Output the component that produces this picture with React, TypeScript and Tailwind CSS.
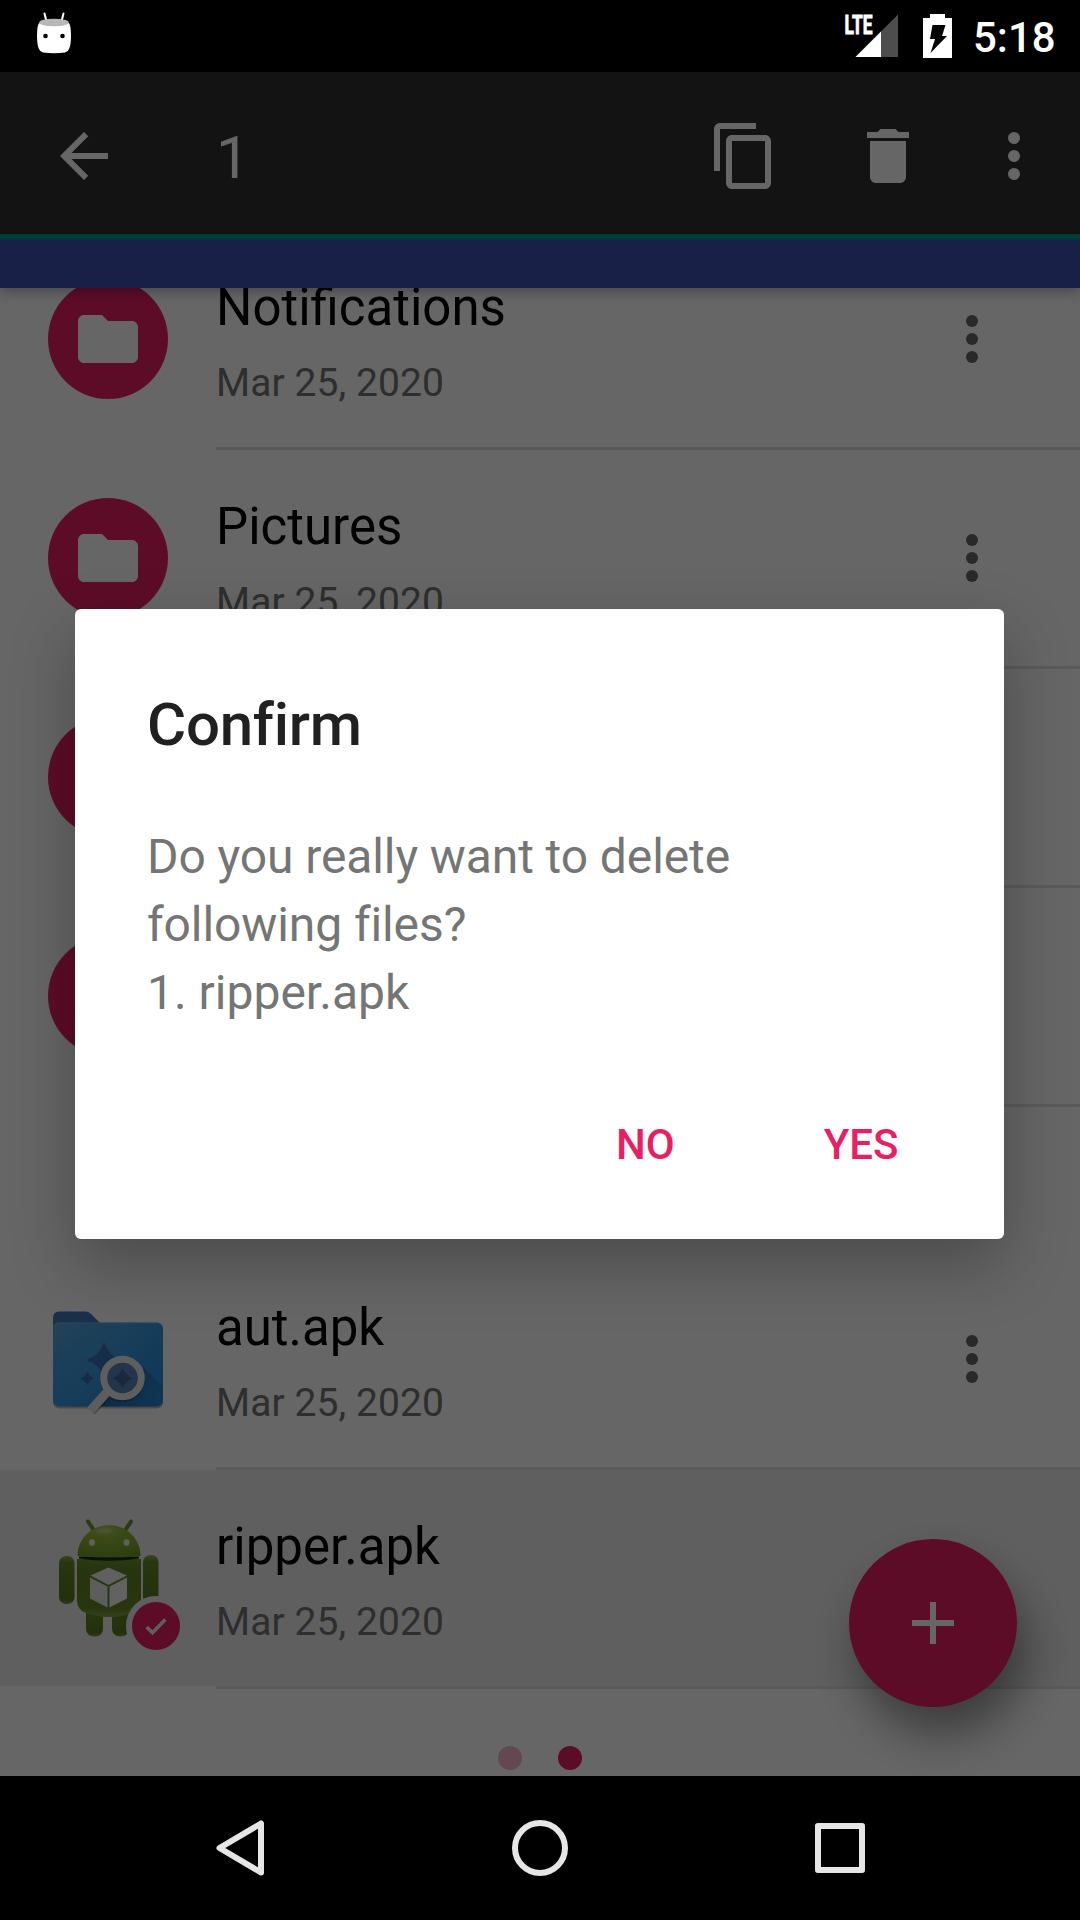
import React from "react";

function MoreIcon({ className }: { className: string }) {
  return (
    <svg viewBox="0 0 24 24" className={`h-[72px] w-[72px] shrink-0 ${className}`} fill="currentColor">
      <circle cx="12" cy="6" r="2" />
      <circle cx="12" cy="12" r="2" />
      <circle cx="12" cy="18" r="2" />
    </svg>
  );
}

function FolderBadge() {
  return (
    <div className="flex h-[120px] w-[120px] items-center justify-center rounded-full bg-[#e91e63]">
      <svg viewBox="0 0 24 24" className="h-[72px] w-[72px]" fill="#fff">
        <path d="M10 4H4c-1.1 0-1.99.9-1.99 2L2 18c0 1.1.9 2 2 2h16c1.1 0 2-.9 2-2V8c0-1.1-.9-2-2-2h-8l-2-2z" />
      </svg>
    </div>
  );
}

/* Blue folder with a magnifier over three sparkles */
function ExplorerIcon() {
  return (
    <svg viewBox="48 1299 120 120" className="h-[120px] w-[120px]">
      <defs>
        <linearGradient id="folder" x1="0" y1="0" x2="1" y2="0.6">
          <stop offset="0" stopColor="#5aa5d8" />
          <stop offset="0.5" stopColor="#429fe0" />
          <stop offset="1" stopColor="#2a90dc" />
        </linearGradient>
        <linearGradient id="folder2" x1="0" y1="0" x2="0" y2="1">
          <stop offset="0" stopColor="#2a90e0" stopOpacity="0" />
          <stop offset="1" stopColor="#2a90e0" stopOpacity="0.5" />
        </linearGradient>
        <linearGradient id="cast" gradientUnits="userSpaceOnUse" x1="125" y1="1375" x2="165" y2="1400">
          <stop offset="0" stopColor="#1c4f8c" stopOpacity="0.55" />
          <stop offset="1" stopColor="#1c4f8c" stopOpacity="0.1" />
        </linearGradient>
      </defs>
      <path d="M53 1400h110v2.500a6 6 0 0 1-6 6H59a6 6 0 0 1-6-6z" fill="#000" opacity=".25" />
      <path d="M53 1350v-32q0-6.500 6.500-6.500h26q3 0 5 2l15 15v20z" fill="#4378c0" />
      <rect x="53" y="1322.500" width="110" height="84" rx="6" fill="url(#folder)" />
      <rect x="53" y="1322.500" width="110" height="84" rx="6" fill="url(#folder2)" />
      <path d="M54 1326q1-3 5-3h98q4 0 5 3" fill="none" stroke="#8abce2" strokeWidth="1" opacity=".6" />
      <path d="M138 1362l25 25v13.500q0 6-6 6H100z" fill="url(#cast)" />
      <path d="M104 1342q4 14 18 18-14 4-18 18-4-14-18-18 14-4 18-18z" fill="#3570b4" />
      <path d="M87.500 1371q2 5.500 7 7.300-5 1.800-7 7.200-2-5.400-7-7.200 5-1.800 7-7.300z" fill="#3570b4" />
      <path d="M106 1395l-15 16" stroke="#000" strokeOpacity=".3" strokeWidth="10" />
      <circle cx="122.500" cy="1379.500" r="19" fill="none" stroke="#000" strokeOpacity=".25" strokeWidth="7" />
      <circle cx="122.500" cy="1378" r="16" fill="#5585b8" />
      <path d="M122.500 1368q3 7.500 10 10.300-7 2.800-10 10.200-3-7.400-10-10.200 7-2.800 10-10.300z" fill="#41659c" />
      <path d="M108 1391l-17.500 19.500" stroke="#e8e8e8" strokeWidth="9" />
      <circle cx="122.500" cy="1378" r="18.800" fill="none" stroke="#ececec" strokeWidth="7" />
    </svg>
  );
}

/* Green robot carrying a package cube */
function RobotIcon() {
  return (
    <svg viewBox="48 1518 120 120" className="h-[120px] w-[120px]">
      <defs>
        <radialGradient id="head" cx="0.45" cy="0.15" r="0.9">
          <stop offset="0" stopColor="#b0c766" />
          <stop offset="0.3" stopColor="#91ba3a" />
          <stop offset="1" stopColor="#729a28" />
        </radialGradient>
        <linearGradient id="body" x1="0" y1="0" x2="0" y2="1">
          <stop offset="0" stopColor="#6c932a" />
          <stop offset="0.2" stopColor="#608424" />
          <stop offset="0.85" stopColor="#638826" />
          <stop offset="1" stopColor="#84a44e" />
        </linearGradient>
        <linearGradient id="limb" x1="0" y1="0" x2="0" y2="1">
          <stop offset="0" stopColor="#8cb04a" />
          <stop offset="0.13" stopColor="#668b26" />
          <stop offset="0.9" stopColor="#577820" />
          <stop offset="1" stopColor="#799356" />
        </linearGradient>
      </defs>
      <path d="M88 1521.500l6 9M131 1521.500l-6 9" stroke="#6d912c" strokeWidth="4" strokeLinecap="round" />
      <rect x="86" y="1600" width="17" height="36.500" rx="7.500" fill="url(#limb)" />
      <rect x="112" y="1600" width="17" height="36.500" rx="7.500" fill="url(#limb)" />
      <rect x="59" y="1556" width="15.500" height="48" rx="7" fill="url(#limb)" />
      <rect x="143" y="1555" width="15.500" height="49" rx="7" fill="url(#limb)" />
      <path d="M77 1559h64v41q0 10-9 13-23 8-46 0-9-3-9-13z" fill="url(#body)" />
      <path d="M79 1556.500h60v2q-30 4.500-60 0z" fill="#1c280c" />
      <path d="M77.500 1556c0-17 14-31 31.500-31s31.500 14 31.500 31q-31.500 3-63 0z" fill="url(#head)" />
      <ellipse cx="104" cy="1531" rx="8" ry="2.500" fill="#d5d9b5" opacity=".4" />
      <ellipse cx="92" cy="1542.500" rx="2.900" ry="3.300" fill="#eee" />
      <ellipse cx="126.500" cy="1542.500" rx="2.900" ry="3.300" fill="#eee" />
      <path d="M108.500 1567.500l18.500 8-18.500 9.500-18-9.500z" fill="#efefef" />
      <path d="M90 1577.500l17.500 9v21l-17.500-9z" fill="#e9e9e9" />
      <path d="M127 1577.500l-17.500 9v21l17.500-9z" fill="#f5f5f5" />
    </svg>
  );
}

function FileRow({ icon, name, selected, menu }: { icon: React.ReactNode; name?: string; selected?: boolean; menu?: boolean }) {
  return (
    <div className="shrink-0">
      <div className={`flex h-[216px] items-start pl-12 ${selected ? "bg-[#eeeeee]" : ""}`}>
        <div className="relative mt-12 h-[120px] w-[120px] shrink-0">
          {icon}
          {selected && (
            <div className="absolute top-[78px] left-[78px] flex h-[60px] w-[60px] items-center justify-center rounded-full border-[6px] border-[#eeeeee] bg-[#e91e63]">
              <svg viewBox="0 0 48 48" className="h-12 w-12 shrink-0">
                <path d="M14.700 25l5.800 5.800 12.800-13.300" fill="none" stroke="#eee" strokeWidth="3.400" />
              </svg>
            </div>
          )}
        </div>
        <div className="mt-[47px] ml-12 flex-1">
          {name && (
            <>
              <div className="text-[51px] leading-[60px] text-black">{name}</div>
              <div className="mt-[21px] text-[39px] leading-[48px] tracking-[0.08px] text-[#737373]">Mar 25, 2020</div>
            </>
          )}
        </div>
        {menu && <MoreIcon className="mt-[72px] mr-[72px] text-[#666]" />}
      </div>
      <div className="ml-[216px] h-[3px] bg-[#e2e2e2]" />
    </div>
  );
}

function StatusBar() {
  return (
    <div className="flex h-[72px] items-start justify-between bg-black">
      <svg viewBox="0 0 100 72" className="h-[72px] w-[100px]">
        <path d="M44.500 13.500l2 8M63.500 13.500l-2 8" stroke="#fff" strokeWidth="2" strokeLinecap="round" />
        <path d="M39 23q15 6 30 0 2 3 2 13 0 9-2 13-1 3-4 3.500-11 1.500-22 0-3-.5-4-3.500-2-4-2-13 0-10 2-13z" fill="#fff" />
        <ellipse cx="54" cy="22.500" rx="14.800" ry="3.800" fill="#b8b8b8" />
        <circle cx="45.500" cy="36" r="2.300" />
        <circle cx="62.500" cy="36" r="2.300" />
      </svg>
      <div className="flex">
        <svg viewBox="840 0 130 72" className="h-[72px] w-[130px]">
          <text
            x="844.500"
            y="33.500"
            fontFamily="Roboto"
            fontWeight="700"
            fontSize="26"
            textLength="28"
            lengthAdjust="spacingAndGlyphs"
            fill="#fff"
            stroke="#fff"
            strokeWidth="0.900"
          >
            LTE
          </text>
          <path d="M898 14.500V57h-42.500z" fill="#4d4d4d" />
          <path d="M881 31.500V57h-25.500z" fill="#fff" />
          <path d="M930 14h15v4h7v40h-29V18h7z" fill="#fff" />
          <path d="M932.500 25h13l-3.500 11h5L930.500 53l4.500-14h-5z" fill="#000" />
        </svg>
        <div className="mt-[14px] w-[110px] pl-[3px] text-[42px] leading-[48px] font-medium text-white">5:18</div>
      </div>
    </div>
  );
}

function ActionBar() {
  return (
    <div className="relative z-10 shrink-0 shadow-[0_4px_12px_rgba(0,0,0,0.3)]">
      <div className="flex h-[162px] items-center bg-[#303030] text-white">
        <svg viewBox="0 0 24 24" className="mt-[6px] ml-12 h-[72px] w-[72px]" fill="currentColor">
          <path d="M20 11H7.830l5.590-5.590L12 4l-8 8 8 8 1.410-1.410L7.830 13H20v-2z" />
        </svg>
        <div className="mt-[10px] ml-24 flex-1 text-[60px] leading-[72px]">1</div>
        <svg viewBox="0 0 24 24" className="mt-[6px] mr-[72px] h-[72px] w-[72px]" fill="currentColor">
          <path d="M16 1H4c-1.100 0-2 .9-2 2v14h2V3h12V1zm3 4H8c-1.100 0-2 .9-2 2v14c0 1.100.9 2 2 2h11c1.100 0 2-.9 2-2V7c0-1.100-.9-2-2-2zm0 16H8V7h11v14z" />
        </svg>
        <svg viewBox="0 0 24 24" className="mt-[6px] mr-[54px] h-[72px] w-[72px]" fill="currentColor">
          <path d="M6 19c0 1.100.9 2 2 2h8c1.100 0 2-.9 2-2V7H6v12zM19 4h-3.500l-1-1h-5l-1 1H5v2h14V4z" />
        </svg>
        <MoreIcon className="mt-[6px] mr-[30px]" />
      </div>
      <div className="h-[6px] bg-[#009688]" />
      <div className="h-12 bg-[#3f51b5]" />
    </div>
  );
}

function ConfirmDialog() {
  return (
    <div className="absolute top-[609px] left-[75px] z-30 h-[630px] w-[929px] rounded-[6px] bg-white px-[72px] pt-[80px] shadow-[0_25px_64px_rgba(0,0,0,0.27)]">
      <div className="text-[60px] leading-[72px] font-medium tracking-[-0.25px] text-[#212121]">Confirm</div>
      <div className="mt-[62px] text-[48px] leading-[68px] tracking-[-0.1px] text-[#757575]">
        Do you really want to delete
        <br />
        following files?
        <br />
        <span className="tracking-normal">1. ripper.apk</span>
      </div>
      <div className="mt-[94px] mr-[33.5px] flex justify-end gap-[149px] text-[42px] leading-[48px] font-medium text-[#e91e63]">
        <button>NO</button>
        <button>YES</button>
      </div>
    </div>
  );
}

export default function App() {
  return (
    <div className="relative flex h-[1920px] w-[1080px] flex-col overflow-hidden bg-black font-['Roboto',sans-serif]">
      <StatusBar />
      <div className="relative flex h-[1704px] flex-col overflow-hidden bg-white">
        <ActionBar />
        <div className="-mt-[57px] flex flex-col">
          <FileRow icon={<FolderBadge />} name="Notifications" menu />
          <FileRow icon={<FolderBadge />} name="Pictures" menu />
          <FileRow icon={<FolderBadge />} />
          <FileRow icon={<FolderBadge />} />
          <div className="h-36" />
          <FileRow icon={<ExplorerIcon />} name="aut.apk" menu />
          <FileRow icon={<RobotIcon />} name="ripper.apk" selected />
        </div>
        <div className="mt-[57px] flex justify-center gap-9">
          <div className="h-6 w-6 rounded-full bg-[#f8b4cb]" />
          <div className="h-6 w-6 rounded-full bg-[#e91e63]" />
        </div>
        <button className="absolute right-[63px] bottom-[69px] flex h-[168px] w-[168px] items-center justify-center rounded-full bg-[#e91e63] shadow-[9px_27px_46px_rgba(0,0,0,0.42)]">
          <svg viewBox="0 0 42 42" className="h-[42px] w-[42px]">
            <path d="M21 0v42M0 21h42" stroke="#fff" strokeWidth="6" />
          </svg>
        </button>
        <div className="absolute inset-0 z-20 bg-black/60" />
      </div>
      <div className="flex h-36 items-center justify-between bg-black px-[204px]">
        <svg viewBox="0 0 72 72" className="h-[72px] w-[72px]" fill="none" stroke="#e6e6e6" strokeWidth="6" strokeLinejoin="round">
          <path d="M57 11.500v49L15.500 36z" />
        </svg>
        <svg viewBox="0 0 72 72" className="h-[72px] w-[72px]" fill="none" stroke="#e6e6e6" strokeWidth="6">
          <circle cx="36" cy="36" r="25" />
        </svg>
        <svg viewBox="0 0 72 72" className="h-[72px] w-[72px]" fill="none" stroke="#e6e6e6" strokeWidth="6" strokeLinejoin="round">
          <rect x="14" y="14" width="44" height="44" />
        </svg>
      </div>
      <ConfirmDialog />
    </div>
  );
}
